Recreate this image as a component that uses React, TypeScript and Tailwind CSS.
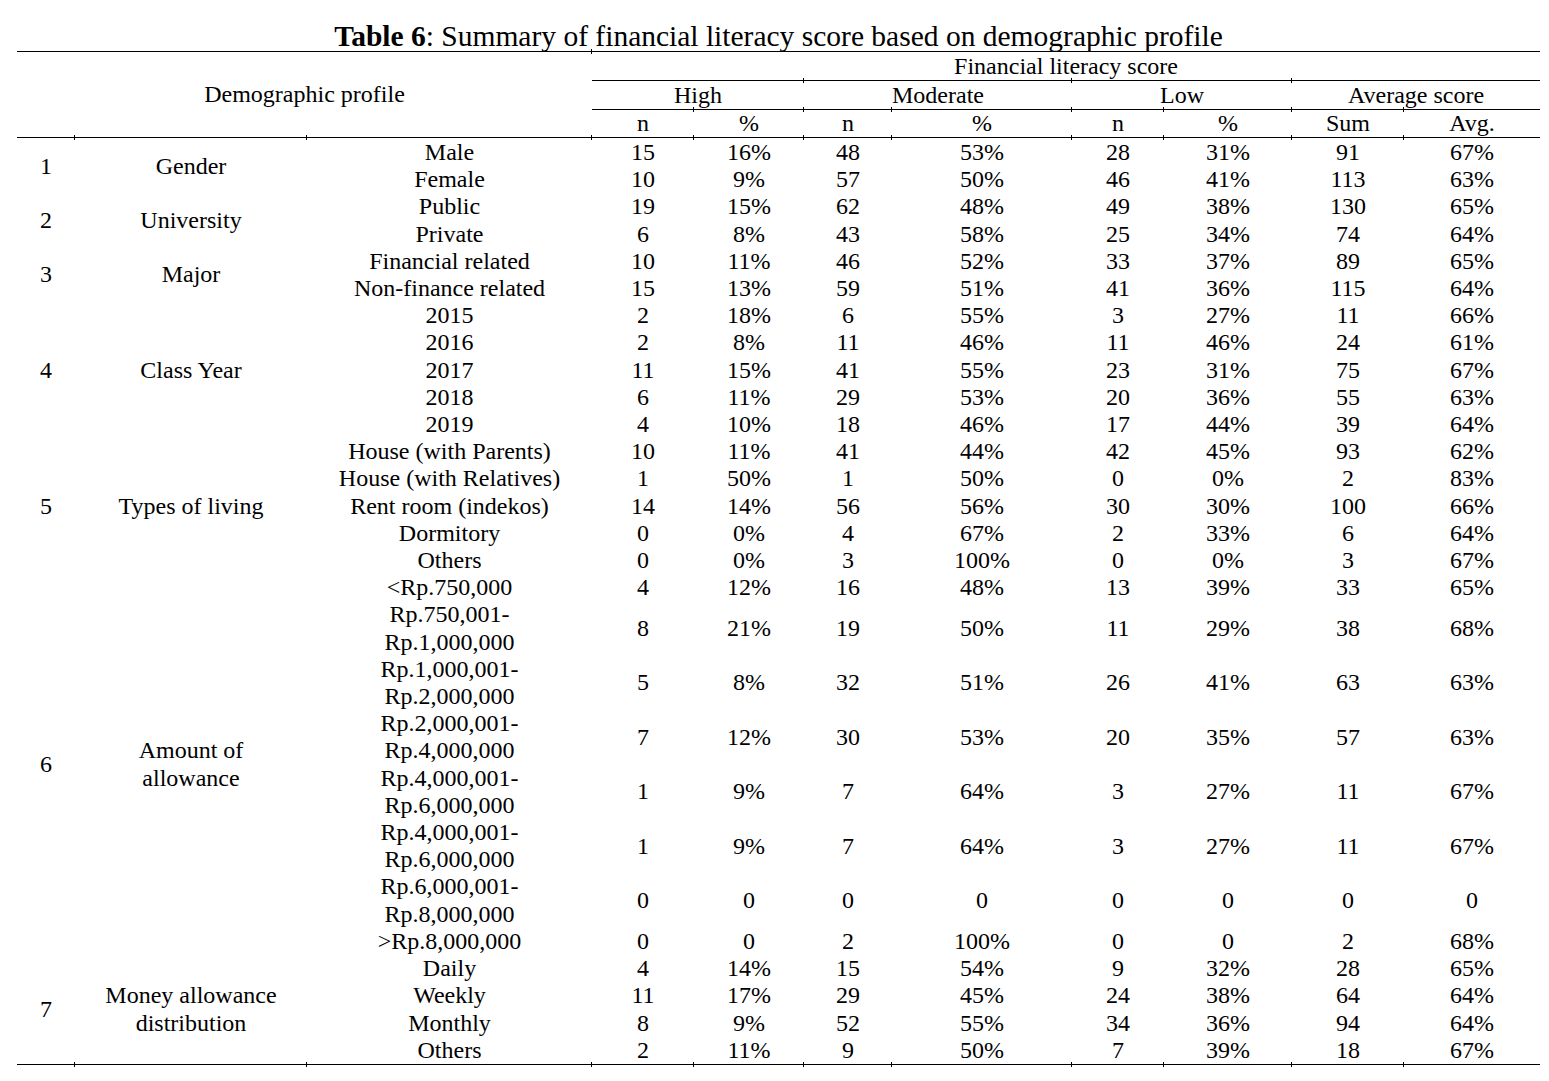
const groups = [
  {
    no: "1",
    label: ["Gender"],
    rows: [
      { sub: ["Male"], v: ["15", "16%", "48", "53%", "28", "31%", "91", "67%"] },
      { sub: ["Female"], v: ["10", "9%", "57", "50%", "46", "41%", "113", "63%"] },
    ],
  },
  {
    no: "2",
    label: ["University"],
    rows: [
      { sub: ["Public"], v: ["19", "15%", "62", "48%", "49", "38%", "130", "65%"] },
      { sub: ["Private"], v: ["6", "8%", "43", "58%", "25", "34%", "74", "64%"] },
    ],
  },
  {
    no: "3",
    label: ["Major"],
    rows: [
      { sub: ["Financial related"], v: ["10", "11%", "46", "52%", "33", "37%", "89", "65%"] },
      { sub: ["Non-finance related"], v: ["15", "13%", "59", "51%", "41", "36%", "115", "64%"] },
    ],
  },
  {
    no: "4",
    label: ["Class Year"],
    rows: [
      { sub: ["2015"], v: ["2", "18%", "6", "55%", "3", "27%", "11", "66%"] },
      { sub: ["2016"], v: ["2", "8%", "11", "46%", "11", "46%", "24", "61%"] },
      { sub: ["2017"], v: ["11", "15%", "41", "55%", "23", "31%", "75", "67%"] },
      { sub: ["2018"], v: ["6", "11%", "29", "53%", "20", "36%", "55", "63%"] },
      { sub: ["2019"], v: ["4", "10%", "18", "46%", "17", "44%", "39", "64%"] },
    ],
  },
  {
    no: "5",
    label: ["Types of living"],
    rows: [
      { sub: ["House (with Parents)"], v: ["10", "11%", "41", "44%", "42", "45%", "93", "62%"] },
      { sub: ["House (with Relatives)"], v: ["1", "50%", "1", "50%", "0", "0%", "2", "83%"] },
      { sub: ["Rent room (indekos)"], v: ["14", "14%", "56", "56%", "30", "30%", "100", "66%"] },
      { sub: ["Dormitory"], v: ["0", "0%", "4", "67%", "2", "33%", "6", "64%"] },
      { sub: ["Others"], v: ["0", "0%", "3", "100%", "0", "0%", "3", "67%"] },
    ],
  },
  {
    no: "6",
    label: ["Amount of", "allowance"],
    rows: [
      { sub: ["<Rp.750,000"], v: ["4", "12%", "16", "48%", "13", "39%", "33", "65%"] },
      { sub: ["Rp.750,001-", "Rp.1,000,000"], v: ["8", "21%", "19", "50%", "11", "29%", "38", "68%"] },
      { sub: ["Rp.1,000,001-", "Rp.2,000,000"], v: ["5", "8%", "32", "51%", "26", "41%", "63", "63%"] },
      { sub: ["Rp.2,000,001-", "Rp.4,000,000"], v: ["7", "12%", "30", "53%", "20", "35%", "57", "63%"] },
      { sub: ["Rp.4,000,001-", "Rp.6,000,000"], v: ["1", "9%", "7", "64%", "3", "27%", "11", "67%"] },
      { sub: ["Rp.4,000,001-", "Rp.6,000,000"], v: ["1", "9%", "7", "64%", "3", "27%", "11", "67%"] },
      { sub: ["Rp.6,000,001-", "Rp.8,000,000"], v: ["0", "0", "0", "0", "0", "0", "0", "0"] },
      { sub: [">Rp.8,000,000"], v: ["0", "0", "2", "100%", "0", "0", "2", "68%"] },
    ],
  },
  {
    no: "7",
    label: ["Money allowance", "distribution"],
    rows: [
      { sub: ["Daily"], v: ["4", "14%", "15", "54%", "9", "32%", "28", "65%"] },
      { sub: ["Weekly"], v: ["11", "17%", "29", "45%", "24", "38%", "64", "64%"] },
      { sub: ["Monthly"], v: ["8", "9%", "52", "55%", "34", "36%", "94", "64%"] },
      { sub: ["Others"], v: ["2", "11%", "9", "50%", "7", "39%", "18", "67%"] },
    ],
  },
];

// little column marks that cross the rules
function TickTop() {
  return <span className="absolute left-[-1px] top-[-3px] h-[5px] w-px bg-black" />;
}

function TickBottom() {
  return <span className="absolute bottom-[-3px] left-[-1px] h-[5px] w-px bg-black" />;
}

function Lines({ text }: { text: string[] }) {
  return (
    <>
      {text.map((t, i) => (
        <div key={i}>{t}</div>
      ))}
    </>
  );
}

export default function App() {
  const lastGroup = groups.length - 1;
  return (
    <div className="w-[1549px] h-[1081px] bg-white text-black font-['Liberation_Serif',serif]">
      <div className="pl-[17px] w-[1540px]">
        <h1 className="pt-[21px] text-center text-[29.5px] leading-[30px] font-normal">
          <b>Table 6</b>: Summary of financial literacy score based on demographic profile
        </h1>
        <table className="w-[1523px] table-fixed border-collapse border-t border-black text-[24px] text-center">
          <colgroup>
            <col className="w-[58px]" />
            <col className="w-[232px]" />
            <col className="w-[285px]" />
            <col className="w-[102px]" />
            <col className="w-[110px]" />
            <col className="w-[88px]" />
            <col className="w-[180px]" />
            <col className="w-[92px]" />
            <col className="w-[128px]" />
            <col className="w-[112px]" />
            <col className="w-[136px]" />
          </colgroup>
          <thead className="leading-[27px]">
            <tr className="h-[29px]">
              <th colSpan={3} rowSpan={3} className="border-b border-black font-normal align-middle">
                Demographic profile
              </th>
              <th colSpan={8} className="relative border-b border-black p-0 font-normal">
                <TickTop />
                Financial literacy score
              </th>
            </tr>
            <tr className="h-[29px]">
              {["High", "Moderate", "Low", "Average score"].map((h, i) => (
                <th key={h} colSpan={2} className="relative border-b border-black p-0 font-normal">
                  {i > 0 && <TickTop />}
                  {h}
                </th>
              ))}
            </tr>
            <tr className="h-[28px]">
              {["n", "%", "n", "%", "n", "%", "Sum", "Avg."].map((h, i) => (
                <th key={i} className="relative border-b border-black p-0 font-normal">
                  {i > 0 && <TickTop />}
                  {h}
                </th>
              ))}
            </tr>
          </thead>
          <tbody className="leading-[27.2px] border-b border-black">
            {groups.map((g, gi) =>
              g.rows.map((r, ri) => {
                const first = gi === 0 && ri === 0;
                const last = gi === lastGroup && ri === g.rows.length - 1;
                const pad = first ? "pt-[1px]" : "";
                return (
                  <tr key={`${gi}-${ri}`}>
                    {ri === 0 && (
                      <>
                        <td rowSpan={g.rows.length} className={`relative p-0 align-middle ${pad}`}>
                          {g.no}
                        </td>
                        <td rowSpan={g.rows.length} className={`relative p-0 align-middle ${pad}`}>
                          {first && <TickTop />}
                          {gi === lastGroup && <TickBottom />}
                          <Lines text={g.label} />
                        </td>
                      </>
                    )}
                    <td className={`relative p-0 align-middle ${pad}`}>
                      {first && <TickTop />}
                      {last && <TickBottom />}
                      <Lines text={r.sub} />
                    </td>
                    {r.v.map((v, vi) => (
                      <td key={vi} className={`relative p-0 align-middle ${pad}`}>
                        {first && <TickTop />}
                        {last && <TickBottom />}
                        {v}
                      </td>
                    ))}
                  </tr>
                );
              })
            )}
          </tbody>
        </table>
      </div>
    </div>
  );
}
